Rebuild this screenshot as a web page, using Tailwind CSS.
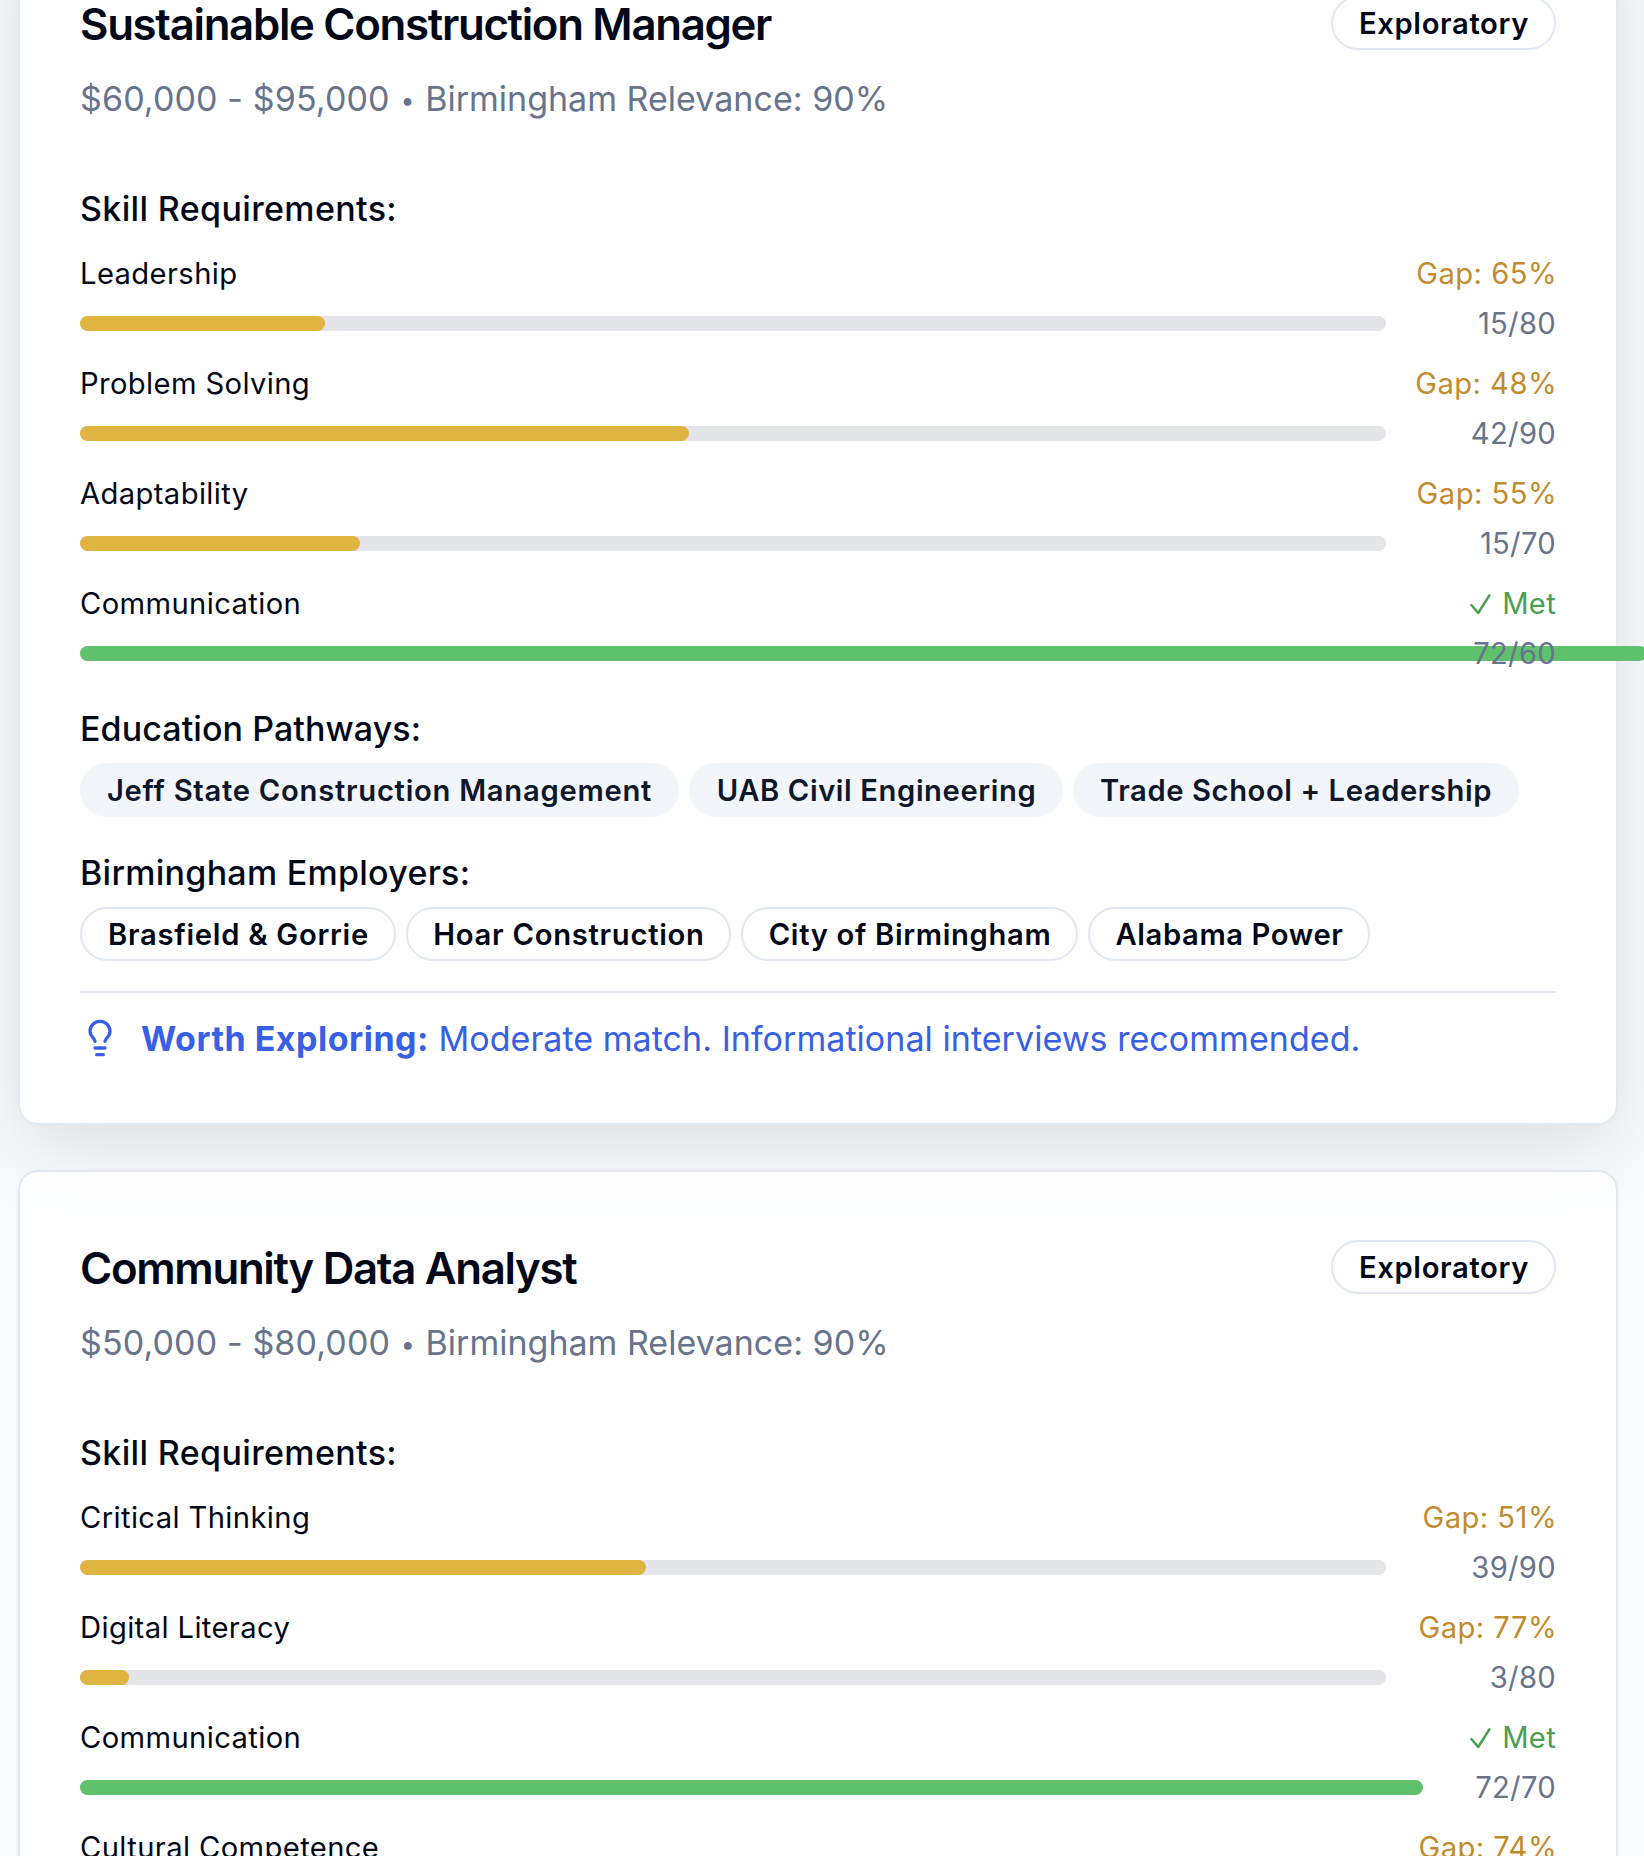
<!DOCTYPE html>
<html lang="en">
<head>
<meta charset="utf-8">
<title>Career matches</title>
<script src="https://cdn.jsdelivr.net/npm/@tailwindcss/browser@4"></script>
</head>
<body class="bg-[#f8fafc] font-['Inter',sans-serif] text-[#020817]">
<div class="h-[1856px] w-full overflow-hidden">
<main id="list" class="-mt-[74px] ml-[18px] flex w-[1600px] flex-col gap-[45px]"></main>
</div>
<script>
const careers = [
  {
    title: "Sustainable Construction Manager", pay: "$60,000 - $95,000",
    shadow: "shadow-[0_20px_80px_rgba(0,0,0,0.12)]",
    skills: [["Leadership", 15, 80, 65, 18.75], ["Problem Solving", 42, 90, 48, 46.6], ["Adaptability", 15, 70, 55, 21.43], ["Communication", 72, 60, 0, 119.97]],
    details: true
  },
  {
    title: "Community Data Analyst", pay: "$50,000 - $80,000",
    shadow: "shadow-[0_2px_5px_rgba(0,0,0,0.04)]",
    skills: [["Critical Thinking", 39, 90, 51, 43.33], ["Digital Literacy", 3, 80, 77, 3.75], ["Communication", 72, 70, 0, 102.83], ["Cultural Competence", 21, 80, 74, 26.25]],
    details: false
  }
];

const check = `<svg class="mt-px h-[21px] w-[21px]" viewBox="0 0 21 21" fill="none" stroke="currentColor" stroke-width="2.5" stroke-linecap="round" stroke-linejoin="round"><path d="M1.4 11 8.2 19 19.4 1.4"/></svg>`;

const skill = ([name, have, need, gap, width]) => `
  <div>
    <div class="flex h-10 items-start justify-between text-[29.2px] leading-[42px]">
      <span class="tracking-[0.38px]">${name}</span>
      ${gap ? `<span class="-mr-px tracking-[0.45px] text-[#c08c2e]">Gap: ${gap}%</span>`
            : `<span class="flex items-center gap-[11px] tracking-[0.3px] text-[#4a9f50]">${check}Met</span>`}
    </div>
    <div class="mt-2.5 flex h-10 items-center gap-5">
      <div class="h-[15px] flex-1 rounded-full bg-[#e4e5e9]">
        <div class="h-[15px] rounded-full ${gap ? "bg-[#e0b440]" : "bg-[#5fc16b]"}" style="width:${width}%"></div>
      </div>
      <span class="relative h-10 w-[150px] text-right text-[29.2px] leading-[42px] tracking-[0.3px] text-[#67748b]">${have}/${need}</span>
    </div>
  </div>`;

const details = `
  <section class="mt-[30px]">
    <h3 class="h-[50px] text-[34px] leading-[52px] font-medium tracking-[0.08px]">Education Pathways:</h3>
    <div class="mt-2.5 flex gap-2.5 text-[29.2px] leading-[42px] font-semibold whitespace-nowrap text-[#0f172a]">
      <span class="flex h-[54px] w-[599px] items-start justify-center rounded-full bg-[#f2f5fa] pt-[7px] tracking-[0.73px]">Jeff State Construction Management</span>
      <span class="flex h-[54px] w-[374px] items-start justify-center rounded-full bg-[#f2f5fa] pt-[7px] pl-px tracking-[0.6px]">UAB Civil Engineering</span>
      <span class="flex h-[54px] w-[446px] items-start justify-center rounded-full bg-[#f2f5fa] pt-[7px] tracking-[0.58px]">Trade School + Leadership</span>
    </div>
  </section>
  <section class="mt-[30px]">
    <h3 class="h-[50px] text-[34px] leading-[52px] font-medium tracking-[0.27px]">Birmingham Employers:</h3>
    <div class="mt-2.5 flex gap-2.5 text-[29.2px] leading-[42px] font-semibold tracking-[0.72px] whitespace-nowrap">
      <span class="flex h-[54px] w-[316px] items-start justify-center rounded-full border-2 border-[#e2e8f0] pt-[5px] pl-px">Brasfield &amp; Gorrie</span>
      <span class="flex h-[54px] w-[325px] items-start justify-center rounded-full border-2 border-[#e2e8f0] pt-[5px] pl-px">Hoar Construction</span>
      <span class="flex h-[54px] w-[337px] items-start justify-center rounded-full border-2 border-[#e2e8f0] pt-[5px] pl-px tracking-[0.66px]">City of Birmingham</span>
      <span class="flex h-[54px] w-[282px] items-start justify-center rounded-full border-2 border-[#e2e8f0] pt-[5px] pl-px tracking-[0.6px]">Alabama Power</span>
    </div>
  </section>
  <footer class="mt-[30px] flex items-start gap-[21px] border-t-2 border-[#e2e8f0] pt-5 text-[#3860e4]">
    <svg class="mt-[5px] h-10 w-10" viewBox="0 0 24 24" fill="none" stroke="currentColor" stroke-width="2" stroke-linecap="round" stroke-linejoin="round"><path d="M15 14c.2-1 .7-1.7 1.5-2.5 1-.9 1.5-2.2 1.5-3.5A6 6 0 0 0 6 8c0 1 .2 2.2 1.5 3.5.7.7 1.3 1.5 1.5 2.5"/><path d="M9 18h6"/><path d="M10 22h4"/></svg>
    <p class="h-[50px] text-[34px] leading-[52px] tracking-[0.05px]"><strong class="font-bold tracking-[0.5px]">Worth Exploring:</strong> Moderate match. Informational interviews recommended.</p>
  </footer>`;

document.getElementById("list").innerHTML = careers.map(c => `
  <article class="rounded-[20px] border-2 border-[#e2e8f0] bg-white/80 bg-clip-padding p-[60px] ${c.shadow}">
    <header>
      <div class="flex h-[70px] items-center justify-between">
        <h2 class="h-[70px] text-[43.75px] leading-[74px] font-semibold tracking-[-1.31px]">${c.title}</h2>
        <span class="flex h-[54px] w-[225px] items-start justify-center rounded-full border-2 border-[#e2e8f0] pt-[5px] pl-px text-[29.2px] leading-[42px] font-semibold tracking-[0.65px]">Exploratory</span>
      </div>
      <p class="mt-[15px] h-[50px] text-[34px] leading-[52px] text-[#67748b]"><span class="tracking-[0.13px]">${c.pay}</span> <span class="mx-[1.2px] align-[2px] text-[25px] leading-none">•</span> Birmingham <span class="tracking-[0.03px]">Relevance: 90%</span></p>
    </header>
    <h3 class="mt-[60px] h-[50px] text-[34px] leading-[52px] font-medium tracking-[0.35px]">Skill Requirements:</h3>
    <div class="mt-5 flex flex-col gap-5">${c.skills.map(skill).join("")}</div>
    ${c.details ? details : ""}
  </article>`).join("");
</script>
</body>
</html>
